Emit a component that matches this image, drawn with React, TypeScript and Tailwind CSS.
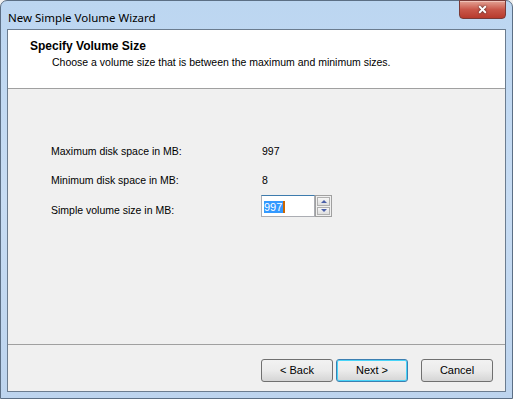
import { X } from "lucide-react";

const ui = { fontFamily: '"Liberation Sans", Arial, sans-serif' };

const WinButton = ({ label, focused }: { label: string; focused?: boolean }) => (
  <button
    className={`w-[72px] h-[23px] rounded-[3px] border text-[11px] text-black flex items-center justify-center bg-gradient-to-b from-[#f2f2f2] via-[#ebebeb] to-[#d5d5d5] ${
      focused ? "border-[#3c7fb1] shadow-[inset_0_0_0_1px_#48d4f8]" : "border-[#707070]"
    }`}
    style={ui}
  >
    {label}
  </button>
);

export default function App() {
  return (
    <div className="w-[513px] h-[399px] bg-[#f0f0f0]" style={ui}>
      {/* Window frame */}
      <div className="w-[513px] h-[399px] rounded-t-[7px] border border-[#5c6f85] bg-gradient-to-b from-[#bcd6f1] via-[#c7dcf3] to-[#bdd4ee] flex flex-col">
        {/* Title bar */}
        <div className="h-[28px] flex items-start justify-between pl-[7px] pr-[6px]">
          <span className="text-[11.5px] text-black mt-[8px]" style={{ fontFamily: '"Noto Sans", "Liberation Sans", sans-serif' }}>
            New Simple Volume Wizard
          </span>
          <div className="w-[47px] h-[19px] -mt-px rounded-b-[4px] border border-[#7a3a37] bg-gradient-to-b from-[#e3a295] via-[#c9574a] to-[#b73a2d] flex items-center justify-center shadow-[inset_0_1px_0_#f0c2b8]">
            <X className="w-[13px] h-[11px] text-white drop-shadow-[0_0_1px_#3a2a2a]" strokeWidth={4} />
          </div>
        </div>

        {/* Client area */}
        <div className="mx-[6px] h-[363px] border border-[#6b7c8f] bg-[#f0f0f0] flex flex-col">
          {/* Header */}
          <div className="h-[59px] bg-white border-b border-[#a0a0a0] pl-[22px] pt-[10px]">
            <div className="text-[12px] font-bold text-black leading-[13px]">Specify Volume Size</div>
            <div className="text-[10.5px] text-black pl-[22px] mt-[3px] leading-[13px]">
              Choose a volume size that is between the maximum and minimum sizes.
            </div>
          </div>

          {/* Body */}
          <div className="flex-1 pl-[43px] pt-[56px] text-[10.5px] text-black">
            <div className="flex h-[13px] items-center">
              <span className="w-[211px]">Maximum disk space in MB:</span>
              <span>997</span>
            </div>
            <div className="flex h-[13px] items-center mt-[16px]">
              <span className="w-[211px]">Minimum disk space in MB:</span>
              <span>8</span>
            </div>
            <div className="flex items-start mt-[8px]">
              <span className="w-[210px] mt-[8px]">Simple volume size in MB:</span>
              <div className="flex h-[22px]">
                <div className="w-[54px] h-[22px] border border-[#abadb3] border-t-[#3d7bad] bg-white pl-[2px] pt-[3px] text-[11px]">
                  <span className="bg-[#3399ff] text-white pr-px border-r-2 border-[#cc6600]">997</span>
                </div>
                <div className="w-[17px] h-[22px] border border-[#a0a0a0] bg-[#f0f0f0] flex flex-col gap-px p-px">
                  <div className="flex-1 border border-[#b0b0b0] bg-gradient-to-b from-[#f6f6f6] to-[#dedede] flex items-center justify-center">
                    <div className="w-0 h-0 border-x-[3px] border-x-transparent border-b-[3px] border-b-[#4a5fa8]" />
                  </div>
                  <div className="flex-1 border border-[#b0b0b0] bg-gradient-to-b from-[#f6f6f6] to-[#dedede] flex items-center justify-center">
                    <div className="w-0 h-0 border-x-[3px] border-x-transparent border-t-[3px] border-t-[#4a5fa8]" />
                  </div>
                </div>
              </div>
            </div>
          </div>

          {/* Footer */}
          <div className="h-[47px] border-t border-[#a0a0a0] flex items-start pt-[14px] pl-[253px] gap-[3px]">
            <WinButton label="< Back" />
            <WinButton label="Next >" focused />
            <div className="w-[7px]" />
            <WinButton label="Cancel" />
          </div>
        </div>
      </div>
    </div>
  );
}
